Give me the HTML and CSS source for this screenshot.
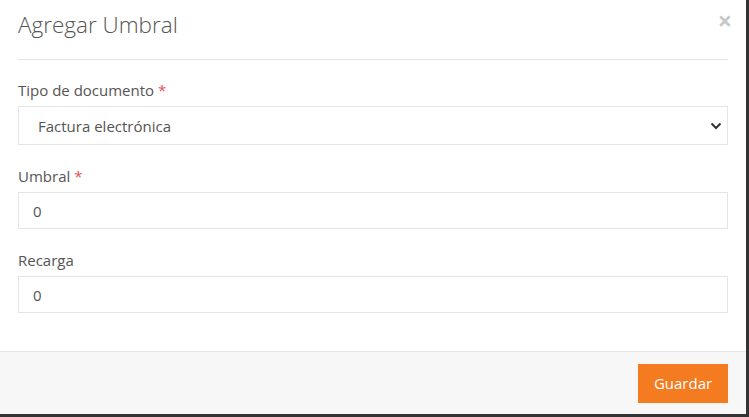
FILE: index.html
```html
<!DOCTYPE html>
<html lang="es">
<head>
    <meta charset="UTF-8">
    <meta name="viewport" content="width=device-width, initial-scale=1.0">
    <title>Agregar Umbral</title>
    <link rel="stylesheet" href="styles.css">
</head>
<body>
    <div class="modal">
        <div class="modal-header">
            <h4 class="modal-title">Agregar Umbral</h4>
            <span class="close">&times;</span>
        </div>
        <div class="modal-body">
            <div class="form-group">
                <label>Tipo de documento <span class="req">*</span></label>
                <div class="select-wrap">
                    <select class="form-control">
                        <option>Factura electrónica</option>
                    </select>
                    <svg class="caret" width="12" height="8" viewBox="0 0 12 8"><path d="M1.5 1.5 6 6l4.5-4.5" fill="none" stroke="#333" stroke-width="2"/></svg>
                </div>
            </div>
            <div class="form-group">
                <label>Umbral <span class="req">*</span></label>
                <input type="text" class="form-control" value="0">
            </div>
            <div class="form-group">
                <label>Recarga</label>
                <input type="text" class="form-control" value="0">
            </div>
        </div>
        <div class="modal-footer">
            <button class="btn">Guardar</button>
        </div>
    </div>
</body>
</html>
```

FILE: styles.css
```css
body {
    margin: 0;
    background: #333;
    font-family: "Open Sans", sans-serif;
    color: #555;
}
.modal {
    width: 746px;
    height: 414px;
    background: #fff;
    display: flex;
    flex-direction: column;
}
.modal-header {
    margin: 0 18px;
    height: 59px;
    border-bottom: 1px solid #e5e5e5;
    display: flex;
    justify-content: space-between;
    align-items: flex-start;
}
.modal-title {
    margin: 10px 0 0;
    font-size: 22.5px;
    font-weight: 300;
    color: #555;
    line-height: 30px;
}
.close {
    margin: 6px -4px 0 0;
    font-size: 25px;
    font-weight: bold;
    color: #c8c8c8;
    line-height: 28px;
}
.modal-body {
    flex: 1;
    padding: 20px 18px 0;
}
.form-group {
    margin-bottom: 21px;
}
label {
    display: block;
    font-size: 15px;
    line-height: 20px;
    margin-bottom: 6px;
    color: #555;
}
.req {
    color: #e7505a;
}
.form-control {
    box-sizing: border-box;
    width: 100%;
    height: 37px;
    border: 1px solid #e5e5e5;
    border-radius: 0;
    padding: 0 14px;
    font-family: "Open Sans", sans-serif;
    font-size: 15px;
    color: #555;
    background: #fff;
    outline: none;
}
.select-wrap {
    position: relative;
}
select.form-control {
    height: 39px;
    padding: 0 19px;
    appearance: none;
}
.caret {
    position: absolute;
    right: 6px;
    top: 16px;
    pointer-events: none;
}
.modal-footer {
    height: 62px;
    background: #f7f7f7;
    border-top: 1px solid #e5e5e5;
    padding: 0 18px;
    display: flex;
    justify-content: flex-end;
    align-items: center;
}
.btn {
    width: 90px;
    height: 39px;
    background: #f47b20;
    color: #fff;
    border: none;
    font-family: "Open Sans", sans-serif;
    font-size: 15px;
    cursor: pointer;
}
```
